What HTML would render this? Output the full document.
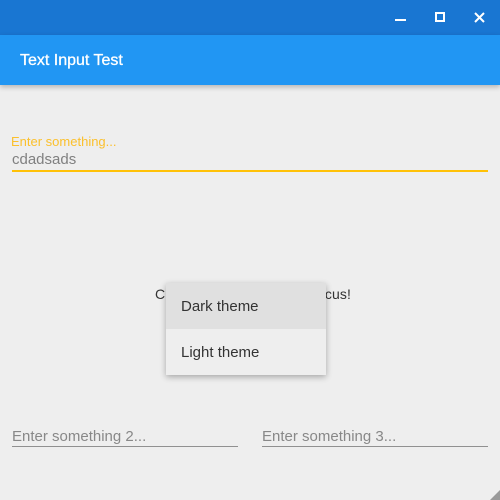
<!DOCTYPE html>
<html><head><style>
body{margin:0;width:500px;height:500px;background:#eeeeee;font-family:"Liberation Sans",sans-serif;position:relative;overflow:hidden}
.tb{position:absolute;left:0;top:0;width:500px;height:35px;background:#1976d2}
.ab{position:absolute;left:0;top:35px;width:500px;height:50px;background:#2196f3;box-shadow:0 2px 5px rgba(0,0,0,.25)}
.ab span{position:absolute;left:20px;top:17px;color:#fff;font-size:16px;-webkit-text-stroke:0.3px #fff}
.a{position:absolute;white-space:nowrap}
</style></head><body>
<div class="tb">
<div class="a" style="left:395px;top:19px;width:11px;height:2px;background:#fff"></div>
<div class="a" style="left:435px;top:12px;width:6px;height:6px;border:2px solid #fff"></div>
<svg class="a" style="left:474px;top:12px" width="11" height="11"><path d="M1 1L10 10M10 1L1 10" stroke="#fff" stroke-width="2"/></svg>
</div>
<div class="ab"><span>Text Input Test</span></div>
<div class="a" style="left:11px;top:134px;font-size:13px;color:#fbc02d">Enter something...</div>
<div class="a" style="left:12px;top:151px;font-size:15px;color:#808080">cdadsads</div>
<div class="a" style="left:12px;top:170px;width:476px;height:2px;background:#ffc107"></div>
<div class="a" style="left:155px;top:286px;font-size:14px;color:#333;letter-spacing:0.1px">Click somewhere to lose focus!</div>
<div class="a" style="left:166px;top:283px;width:160px;height:92px;background:#eeeeee;box-shadow:0 2px 6px rgba(0,0,0,.3)">
<div style="height:46px;background:#e0e0e0;font-size:15px;color:#333;line-height:48px;padding-left:15px">Dark theme</div>
<div style="height:46px;font-size:15px;color:#333;line-height:48px;padding-left:15px">Light theme</div>
</div>
<div class="a" style="left:12px;top:428px;font-size:15px;color:#888">Enter something 2...</div>
<div class="a" style="left:12px;top:446px;width:226px;height:1px;background:#909090"></div>
<div class="a" style="left:262px;top:428px;font-size:15px;color:#888">Enter something 3...</div>
<div class="a" style="left:262px;top:446px;width:226px;height:1px;background:#909090"></div>
<svg class="a" style="left:490px;top:490px" width="10" height="10"><path d="M10 0L10 10L0 10Z" fill="#999"/></svg>
</body></html>
